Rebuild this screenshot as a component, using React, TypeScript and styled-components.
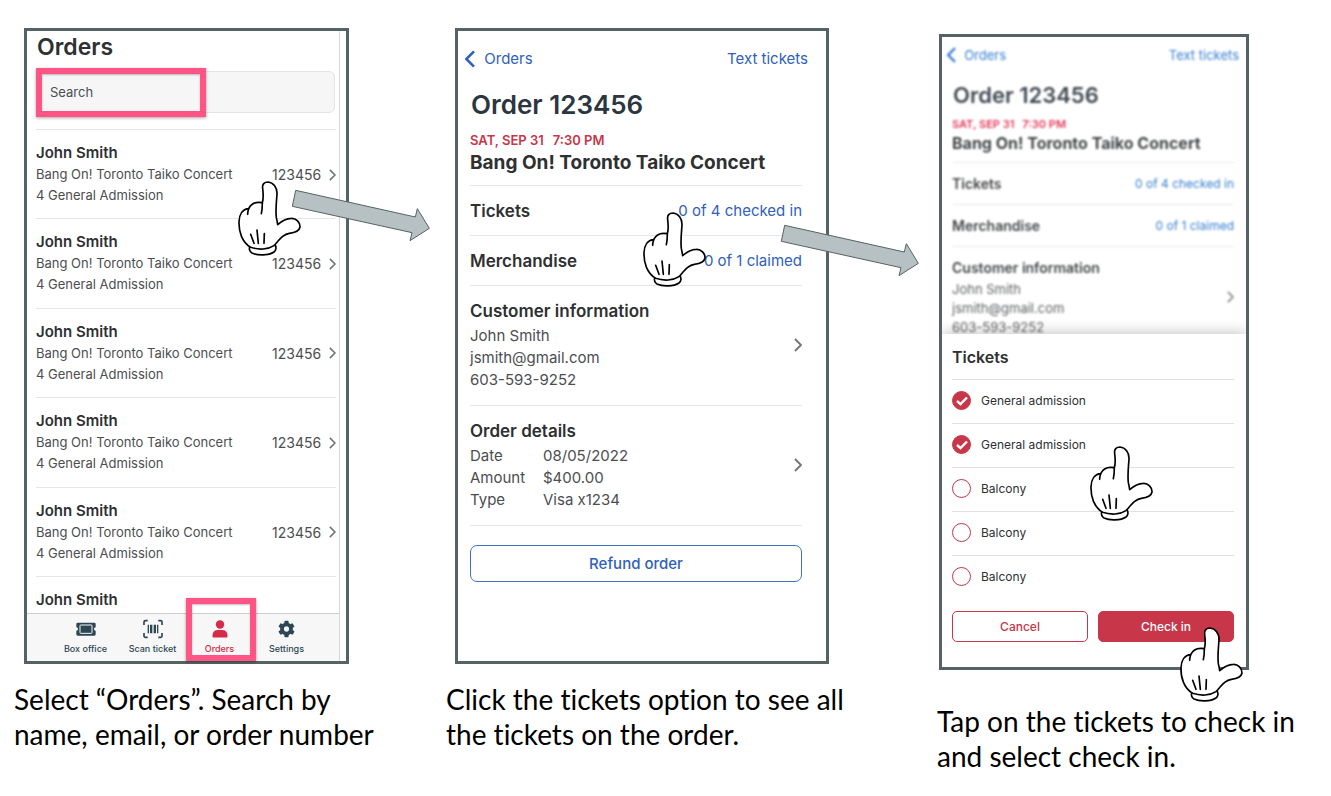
import React from "react";
import styled, { createGlobalStyle, css } from "styled-components";
import { FaCog } from "react-icons/fa";

const ink = "#2e3032";
const muted = "#4c4e50";
const blue = "#2f60bd";
const red = "#c83649";
const frame = "#556364";
const pink = "#ff5586";
const rule = "#e6e6e8";

const GlobalStyle = createGlobalStyle`
  *, *::before, *::after { box-sizing: border-box; }
  body { margin: 0; background: #fff; color: ${ink}; font-family: Inter, "Liberation Sans", sans-serif; }
  h1, h2, h3, p, ul, dl, dd { margin: 0; padding: 0; }
  ul { list-style: none; }
  a { color: inherit; text-decoration: none; }
  button, input { font: inherit; }
`;

const Guide = styled.main`
  display: grid;
  grid-template-columns: 432fr 491fr 394fr;
  align-items: start;
  min-width: 1100px;
  padding: 28px 0 24px 14px;
`;

const Step = styled.section<{ $low?: boolean }>`
  padding-top: ${(p) => (p.$low ? 6 : 0)}px;
`;

const Caption = styled.p<{ $low?: boolean }>`
  margin-top: ${(p) => (p.$low ? 34 : 18)}px;
  color: #000;
  font: 400 28px/35px Lato, sans-serif;
  font-variant-ligatures: none;
  white-space: nowrap;
`;

const Phone = styled.div<{ $left: number; $right: number }>`
  position: relative;
  display: flex;
  flex-direction: column;
  min-height: 636px;
  margin: 0 ${(p) => p.$right}px 0 ${(p) => p.$left}px;
  border: 3px solid ${frame};
  background: #fff;
`;

/* Order list */

const ListScreen = styled.div`
  display: flex;
  flex-direction: column;
  flex: 1;
  margin-right: 6px;
  border-right: 1px solid #d9d9d9;
`;

const ListHead = styled.header`
  padding: 2px 4px 16px 10px;
`;

const ListTitle = styled.h1`
  font-size: 23px;
  line-height: 28px;
  font-weight: 600;
`;

const SearchBox = styled.div`
  position: relative;
  margin: 10px 0 0 -1px;
`;

const SearchInput = styled.input`
  display: block;
  width: 100%;
  height: 42px;
  padding: 0 13px;
  border: 1px solid #e4e4e4;
  border-radius: 6px;
  background: #f6f6f6;
  font-size: 13px;
  color: ${muted};
  &::placeholder { color: ${muted}; opacity: 1; }
`;

const Highlight = styled.span<{ $box: string }>`
  position: absolute;
  inset: ${(p) => p.$box};
  border: 6px solid ${pink};
  box-shadow: 0 1px 3px rgba(0, 0, 0, 0.35), inset 0 1px 2px rgba(0, 0, 0, 0.25);
  pointer-events: none;
`;

const OrderList = styled.ul`
  display: grid;
  grid-template-rows: repeat(5, 1fr) 37px;
  height: 484px;
  padding: 0 3px 0 9px;
`;

const OrderRow = styled.li`
  border-top: 1px solid ${rule};
`;

const OrderLink = styled.a`
  display: grid;
  grid-template-columns: 1fr auto auto;
  align-items: center;
  column-gap: 8px;
  padding-top: 12px;
  color: ${muted};
  font-size: 13px;
  line-height: 21px;
`;

const Customer = styled.strong`
  grid-column: 1 / -1;
  color: ${ink};
  font-size: 15px;
  line-height: 22px;
  font-weight: 600;
`;

const OrderNumber = styled.span`
  font-size: 14px;
`;

const Admission = styled.span`
  grid-column: 1 / -1;
`;

const TabBar = styled.nav`
  display: grid;
  grid-template-columns: repeat(4, 1fr);
  flex: 1;
  padding: 0 19px 0 25px;
  border-top: 1px solid #cfcfcf;
  background: #f7f7f7;
`;

const Tab = styled.button<{ $active?: boolean }>`
  position: relative;
  display: flex;
  flex-direction: column;
  align-items: center;
  gap: 4px;
  padding: 5px 0 0;
  border: 0;
  background: none;
  color: ${(p) => (p.$active ? "#d62a48" : "#2c4654")};
  font-size: 9px;
  line-height: 12px;
  font-weight: 500;
  white-space: nowrap;
  svg { display: block; height: 20px; }
`;

/* Order details; the compact size is used behind the ticket sheet */

type Size = { $compact?: boolean };
const size = (full: number, compact: number) => (p: Size) => (p.$compact ? compact : full) + "px";

const Details = styled.div<Size>`
  ${(p) =>
    p.$compact &&
    css`
      height: 297px;
      overflow: hidden;
      filter: blur(1px);
      opacity: 0.9;
    `}
`;

const TopBar = styled.div<Size>`
  display: flex;
  align-items: center;
  justify-content: space-between;
  padding: ${(p) => (p.$compact ? "8px 7px 0 5px" : "16px 18px 0 7px")};
  color: ${(p) => (p.$compact ? "#1f6fcb" : blue)};
  font-size: ${size(15, 13)};
  line-height: ${size(24, 20)};
`;

const BackLink = styled.a<Size>`
  display: flex;
  align-items: center;
  gap: ${size(9, 8)};
`;

const Body = styled.div<Size>`
  padding: ${(p) => (p.$compact ? "17px 12px 0 10px" : "18px 24px 0 12px")};
`;

const OrderTitle = styled.h1<Size>`
  padding-left: 1px;
  color: #2c363f;
  font-size: ${size(26, 22)};
  line-height: ${size(32, 26)};
  font-weight: 600;
`;

const EventDate = styled.p<Size>`
  display: flex;
  gap: ${size(9, 8)};
  margin-top: ${size(10, 8)};
  color: ${(p) => (p.$compact ? "#e01f45" : red)};
  font-size: ${size(13, 11)};
  line-height: ${size(18, 16)};
  font-weight: 600;
`;

const EventName = styled.h2<Size>`
  padding-bottom: ${size(8, 7)};
  font-size: ${size(19, 16)};
  line-height: ${size(28, 23)};
  font-weight: 700;
  white-space: nowrap;
`;

const Line = styled.a<Size>`
  display: flex;
  align-items: center;
  justify-content: space-between;
  height: ${size(50, 42)};
  border-top: 1px solid ${rule};
  color: ${(p) => (p.$compact ? "#1f6fcb" : blue)};
  font-size: ${size(15, 12)};
`;

const Heading = styled.h3<Size>`
  color: ${ink};
  font-size: ${size(17, 14)};
  line-height: ${size(24, 20)};
  font-weight: 600;
`;

const Info = styled.a<Size>`
  display: flex;
  align-items: center;
  justify-content: space-between;
  height: ${size(120, 101)};
  padding-bottom: ${size(2, 0)};
  border-top: 1px solid ${rule};
  color: ${muted};
  font-size: ${size(15, 13)};
  line-height: ${size(22, 19)};
  ${Heading} { margin-bottom: 2px; }
`;

const Facts = styled.dl`
  display: grid;
  grid-template-columns: 73px auto;
`;

const Refund = styled.button`
  width: 100%;
  height: 37px;
  margin-top: 19px;
  border: 1px solid #3d74c6;
  border-radius: 7px;
  background: #fff;
  color: ${blue};
  font-size: 15px;
  font-weight: 500;
`;

const EndRule = styled.div`
  border-top: 1px solid ${rule};
`;

/* Ticket sheet */

const Sheet = styled.form`
  position: relative;
  flex: 1;
  padding: 11px 12px 0 10px;
  background: #fff;
  box-shadow: 0 -2px 12px rgba(0, 0, 0, 0.22);
  clip-path: inset(-14px 0 0 0);
`;

const SheetTitle = styled.h2`
  padding-bottom: 10px;
  font-size: 16px;
  line-height: 24px;
  font-weight: 600;
`;

const TicketRow = styled.label`
  display: flex;
  align-items: center;
  gap: 10px;
  height: 44px;
  padding-bottom: 2px;
  border-top: 1px solid #e1e1e1;
  font-size: 12px;
`;

const Tick = styled.span`
  display: grid;
  place-items: center;
  > * { grid-area: 1 / 1; }
  svg { position: relative; pointer-events: none; }
`;

const TickInput = styled.input`
  appearance: none;
  width: 19px;
  height: 19px;
  margin: 0;
  border: 1px solid ${red};
  border-radius: 50%;
  background: #fff;
  &:checked { background: ${red}; }
`;

const Actions = styled.div`
  display: grid;
  grid-template-columns: 1fr 1fr;
  gap: 10px;
  margin-top: 12px;
`;

const Action = styled.button<{ $filled?: boolean }>`
  height: 31px;
  border: 1px solid ${red};
  border-radius: 5px;
  background: ${(p) => (p.$filled ? red : "#fff")};
  color: ${(p) => (p.$filled ? "#fff" : red)};
  font-size: 12px;
  font-weight: 500;
`;

/* Pointers laid over the screens */

const Pointer = styled.svg<{ $top: number; $right: number }>`
  position: absolute;
  z-index: 2;
  top: ${(p) => p.$top}px;
  right: ${(p) => p.$right}px;
  overflow: visible;
  pointer-events: none;
`;

const Hand = ({ top, right }: { top: number; right: number }) => (
  <Pointer $top={top} $right={right} width="63" height="75" viewBox="0 0 189 225" aria-hidden="true">
    <g fill="#fff" stroke="#000" strokeWidth="5" strokeLinecap="round" strokeLinejoin="round">
      <path d="M36 196C32 202 35 212 42 216C58 224 92 224 108 213C115 208 116 198 110 190Z" />
      <path d="M38 199C12 184 2 152 3 122C4 100 14 84 32 83C38 70 52 61 73 65C77 52 76 38 74 22C72 10 79 3 90 3C106 5 118 19 117 39C116 56 112 85 115 110C117 118 118 124 119 131C130 121 143 112 160 112C174 111 187 125 186 138C184 149 171 155 154 157C137 159 126 174 108 194C90 206 62 207 38 199Z" />
      <path d="M32 83C30 89 29 94 29 100M73 65C73 77 73 86 70 98M38 160L48 187M57 147L61 187M79 158L78 187" fill="none" />
    </g>
  </Pointer>
);

const Arrow = ({ top, right }: { top: number; right: number }) => (
  <Pointer $top={top} $right={right} width="138" height="51" viewBox="0 0 414 153" aria-hidden="true">
    <path d="M11 1L370 81L376 56L412 115L354 152L360 128L1 49Z" fill="#b7c0c2" stroke={frame} strokeWidth="3" />
  </Pointer>
);

const Chevron = ({ height, back, color = "#6f7173" }: { height: number; back?: boolean; color?: string }) => (
  <svg width={(height * 4) / 7} height={height} viewBox="0 0 8 14" fill="none" stroke={color} strokeWidth={back ? 2 : 1.8} aria-hidden="true">
    <path d={back ? "M7 1L1 7L7 13" : "M1 1L7 7L1 13"} />
  </svg>
);

const TicketIcon = () => (
  <svg width="20" height="20" viewBox="0 0 60 60" aria-hidden="true">
    <path d="M5 11H55Q59 11 59 15V25A5 5 0 0 0 59 35V46Q59 50 55 50H5Q1 50 1 46V35A5 5 0 0 0 1 25V15Q1 11 5 11Z" fill="#2c4654" />
    <rect x="12" y="18" width="36" height="25" rx="2" fill="none" stroke="#f7f7f7" strokeWidth="3" />
  </svg>
);

const ScanIcon = () => (
  <svg width="20" height="20" viewBox="0 0 60 60" fill="none" stroke="#2c4654" aria-hidden="true">
    <path d="M14 5H7Q3 5 3 9V18M46 5H53Q57 5 57 9V18M14 55H7Q3 55 3 51V42M46 55H53Q57 55 57 51V42" strokeWidth="5" />
    <path d="M16 17V43M44 17V43" strokeWidth="4" />
    <path d="M24 17V43M36 17V43" strokeWidth="6" />
    <path d="M30 17V43" strokeWidth="2" />
  </svg>
);

const PersonIcon = () => (
  <svg width="16" height="20" viewBox="0 0 16 20" fill="currentColor" aria-hidden="true">
    <circle cx="8" cy="5.5" r="4.2" />
    <path d="M1.5 18.5Q0.5 18.5 0.5 17.5V16.5Q0.5 11 6 11H10Q15.5 11 15.5 16.5V17.5Q15.5 18.5 14.5 18.5Z" />
  </svg>
);

const OrderDetails = ({ compact }: { compact?: boolean }) => (
  <Details $compact={compact}>
    <TopBar $compact={compact}>
      <BackLink href="#orders" $compact={compact}>
        <Chevron back height={compact ? 16 : 18} color={compact ? "#1f6fcb" : blue} />
        Orders
      </BackLink>
      <a href="#text">Text tickets</a>
    </TopBar>
    <Body $compact={compact}>
      <OrderTitle $compact={compact}>Order 123456</OrderTitle>
      <EventDate $compact={compact}>
        <span>SAT, SEP 31</span>
        <span>7:30 PM</span>
      </EventDate>
      <EventName $compact={compact}>Bang On! Toronto Taiko Concert</EventName>
      <Line href="#tickets" $compact={compact}>
        <Heading $compact={compact}>Tickets</Heading>0 of 4 checked in
      </Line>
      <Line href="#merchandise" $compact={compact}>
        <Heading $compact={compact}>Merchandise</Heading>0 of 1 claimed
      </Line>
      <Info href="#customer" $compact={compact}>
        <div>
          <Heading $compact={compact}>Customer information</Heading>
          <p>John Smith</p>
          <p>jsmith@gmail.com</p>
          <p>603-593-9252</p>
        </div>
        <Chevron height={compact ? 12 : 14} />
      </Info>
      {!compact && (
        <>
          <Info href="#details">
            <div>
              <Heading>Order details</Heading>
              <Facts>
                <dt>Date</dt>
                <dd>08/05/2022</dd>
                <dt>Amount</dt>
                <dd>$400.00</dd>
                <dt>Type</dt>
                <dd>Visa x1234</dd>
              </Facts>
            </div>
            <Chevron height={14} />
          </Info>
          <EndRule />
          <Refund type="button">Refund order</Refund>
        </>
      )}
    </Body>
  </Details>
);

const tickets = [
  { name: "General admission", checked: true },
  { name: "General admission", checked: true },
  { name: "Balcony", checked: false },
  { name: "Balcony", checked: false },
  { name: "Balcony", checked: false },
];

export default function App() {
  return (
    <>
      <GlobalStyle />
      <Guide>
        <Step>
          <Phone $left={10} $right={97}>
            <ListScreen>
              <ListHead>
                <ListTitle>Orders</ListTitle>
                <SearchBox>
                  <SearchInput type="search" placeholder="Search" aria-label="Search" />
                  <Highlight $box="-3px 129px -4px 0" />
                </SearchBox>
              </ListHead>
              <OrderList>
                {[1, 2, 3, 4, 5].map((n) => (
                  <OrderRow key={n}>
                    <OrderLink href="#order">
                      <Customer>John Smith</Customer>
                      <span>Bang On! Toronto Taiko Concert</span>
                      <OrderNumber>123456</OrderNumber>
                      <Chevron height={12} />
                      <Admission>4 General Admission</Admission>
                    </OrderLink>
                  </OrderRow>
                ))}
                <OrderRow>
                  <OrderLink href="#order">
                    <Customer>John Smith</Customer>
                  </OrderLink>
                </OrderRow>
              </OrderList>
              <TabBar>
                <Tab type="button">
                  <TicketIcon />
                  Box office
                </Tab>
                <Tab type="button">
                  <ScanIcon />
                  Scan ticket
                </Tab>
                <Tab type="button" $active>
                  <PersonIcon />
                  Orders
                  <Highlight $box="-16px -3px 0 0" />
                </Tab>
                <Tab type="button">
                  <FaCog size={17} />
                  Settings
                </Tab>
              </TabBar>
            </ListScreen>
            <Hand top={150} right={45} />
            <Arrow top={159} right={-84} />
          </Phone>
          <Caption>
            Select “Orders”. Search by
            <br />
            name, email, or order number
          </Caption>
        </Step>

        <Step>
          <Phone $left={9} $right={108}>
            <OrderDetails />
            <Hand top={181} right={120} />
            <Arrow top={194} right={-93} />
          </Phone>
          <Caption>
            Click the tickets option to see all
            <br />
            the tickets on the order.
          </Caption>
        </Step>

        <Step $low>
          <Phone $left={2} $right={82}>
            <OrderDetails compact />
            <Sheet>
              <SheetTitle>Tickets</SheetTitle>
              {tickets.map((ticket, i) => (
                <TicketRow key={i}>
                  <Tick>
                    <TickInput type="checkbox" defaultChecked={ticket.checked} />
                    {ticket.checked && (
                      <svg width="12" height="10" viewBox="0 0 12 10" fill="none" stroke="#fff" strokeWidth="2.4" aria-hidden="true">
                        <path d="M1 5L4.5 8.2L11 1.5" />
                      </svg>
                    )}
                  </Tick>
                  {ticket.name}
                </TicketRow>
              ))}
              <Actions>
                <Action type="button">Cancel</Action>
                <Action type="button" $filled>
                  Check in
                </Action>
              </Actions>
            </Sheet>
            <Hand top={409} right={93} />
            <Hand top={590} right={3} />
          </Phone>
          <Caption $low>
            Tap on the tickets to check in
            <br />
            and select check in.
          </Caption>
        </Step>
      </Guide>
    </>
  );
}
